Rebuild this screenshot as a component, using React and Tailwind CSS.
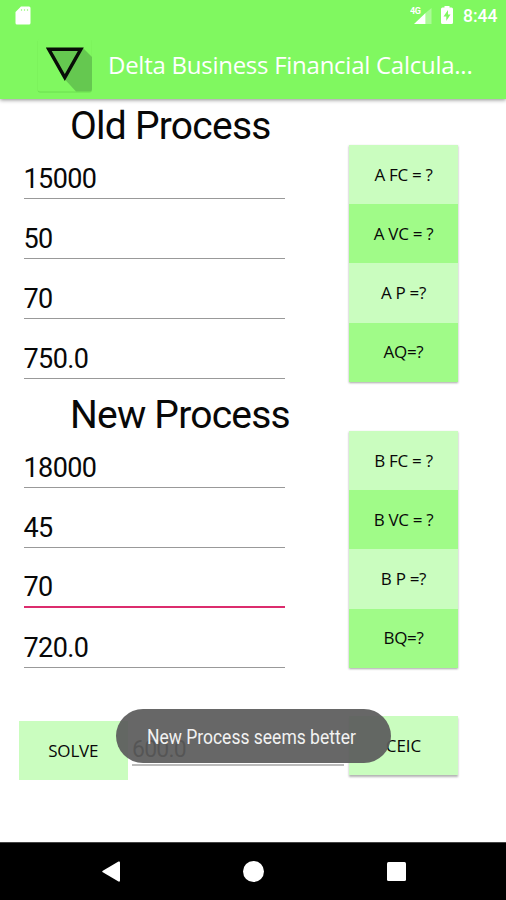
const oldProcess = {
  title: 'Old Process',
  values: ['15000', '50', '70', '750.0'],
  buttons: ['A FC = ?', 'A VC = ?', 'A P =?', 'AQ=?'],
};
const newProcess = {
  title: 'New Process',
  values: ['18000', '45', '70', '720.0'],
  buttons: ['B FC = ?', 'B VC = ?', 'B P =?', 'BQ=?'],
};

function Header() {
  return (
    <header className="relative z-10 h-[98.500px] shrink-0 bg-[#80f860] text-white shadow-[0_1px_4px_rgba(0,0,0,0.45)]">
      <div className="flex h-8 items-center justify-between pl-[15px] pr-[9px]">
        <svg className="mt-[-2px] h-[19px] w-4" viewBox="0 0 16 19" fill="currentColor">
          <path d="M6 0.5h8q1.5 0 1.5 1.5v15q0 1.5-1.5 1.5H2Q.5 18.5 .5 17V6z" />
          <path d="M6.500 3v2M9.500 3v2M12.500 3v2" stroke="#b5fba2" strokeWidth="1.200" />
        </svg>
        <div className="flex items-center">
          <svg className="h-[18px] w-[23px]" viewBox="0 0 23 18" fill="currentColor">
            <text x="0" y="7" fontFamily="Roboto, sans-serif" fontSize="9" fontWeight="700" textLength="11">4G</text>
            <path d="M4 17L15.500 6V17z" />
            <path d="M15.500 6L21.500 1v16h-6z" opacity=".35" />
          </svg>
          <svg className="ml-[8px] mt-[-2px] h-[18px] w-3" viewBox="0 0 12 18">
            <path fill="currentColor" d="M3.500 0h5v1.500h2q1.500 0 1.500 1.500v13.500q0 1.500-1.500 1.500h-9Q0 18 0 16.500V3q0-1.500 1.500-1.500h2z" />
            <path fill="#80f860" d="M7 4L2.500 10.500H5.300V15L9.500 8.500H7z" />
          </svg>
          <span className="ml-[10px] w-[34px] whitespace-nowrap font-[Roboto,sans-serif] text-[17.500px] font-medium leading-8">8:44</span>
        </div>
      </div>
      <div className="flex h-[66px] items-start pl-[37px] pt-[5px]">
        <svg className="h-[56px] w-[56px]" viewBox="0 0 56 56">
          <rect x=".8" y="2.500" width="54" height="53" rx="2" fill="#5fd045" opacity=".6" />
          <rect x=".8" y="1.500" width="54" height="53" rx="2" fill="#80f860" />
          <path d="M46 11L55 20V52Q55 54.500 52.500 54.500H39L27.500 42z" fill="#65c850" />
          <path d="M11.800 12.300H43.800L27.800 40.500z" fill="#65c850" stroke="#080d07" strokeWidth="3.500" />
        </svg>
        <h1 className="ml-[15px] mt-[12px] whitespace-nowrap font-['Open_Sans',sans-serif] text-[24px] leading-8 tracking-[-0.26px]">Delta Business Financial Calcula...</h1>
      </div>
    </header>
  );
}

function Field({ value, active }) {
  return (
    <div className="flex h-[59.900px] items-end">
      <div className={active
        ? 'h-[42px] w-[261.500px] border-b-2 border-[#dc2c6d] text-[27px] leading-[43px] tracking-[-0.6px]'
        : 'h-[41px] w-[261.500px] border-b-[1.500px] border-[#999] text-[27px] leading-[42px] tracking-[-0.6px]'}>{value}</div>
    </div>
  );
}

function Section({ data, first }) {
  return (
    <section className="flex justify-between pl-[23.500px] pr-12">
      <div className="flex flex-col">
        <h2 className={first
          ? 'h-[40.500px] whitespace-nowrap pl-[46.500px] text-[39px] leading-[54px] tracking-[-0.76px]'
          : 'h-[49.500px] whitespace-nowrap pl-[46.500px] text-[39px] leading-[72px] tracking-[-0.78px]'}>
          {data.title}
        </h2>
        {data.values.map((v, i) => <Field key={i} value={v} active={!first && i === 2} />)}
      </div>
      <div className={first ? 'h-[280px] pt-[46.500px]' : 'pt-[52.500px]'}>
        <div className="w-[109px] shadow-[0_1px_2px_rgba(0,0,0,0.35)]">
          {data.buttons.map((label) => (
            <div key={label} className="flex h-[59.200px] items-center justify-center whitespace-pre bg-[#cafdbf] font-['Open_Sans',sans-serif] text-[17px] tracking-[-0.3px] even:bg-[#a0fb88]">
              {label}
            </div>
          ))}
        </div>
      </div>
    </section>
  );
}

export default function App() {
  return (
    <div className="relative flex h-[900px] w-[506px] flex-col overflow-hidden bg-white font-[Roboto,sans-serif] text-[#080808]">
      <Header />
      <main className="flex-1">
        <Section data={oldProcess} first />
        <Section data={newProcess} />
        <div className="flex items-start pl-[19px] pt-[48px] font-['Open_Sans',sans-serif] text-[17px]">
          <div className="mt-[5px] flex h-[59px] w-[108.500px] items-center justify-center bg-[#cafdbf] tracking-[-0.2px]">SOLVE</div>
          <div className="ml-[4.500px] mt-2 h-[42px] w-[212px] border-b-2 border-[#bbb] font-[Roboto,sans-serif] text-[23px] leading-[51px] tracking-[-0.8px]">600.0</div>
          <div className="ml-[5px] flex h-[59px] w-[109px] items-center justify-center bg-[#cafdbf] shadow-[0_2px_2px_rgba(0,0,0,0.3)]">CEIC</div>
        </div>
      </main>
      <nav className="flex h-[58px] shrink-0 items-center border-t border-[#444] bg-black pl-[102px] text-white">
        <svg className="h-[21px] w-[18px]" viewBox="0 0 18 21" fill="currentColor">
          <path d="M16.500 .5Q18 0 18 1.500v18q0 1.500-1.500 1L.8 11.300Q-.4 10.500.8 9.700z" />
        </svg>
        <div className="ml-[123px] size-[21px] rounded-full bg-white" />
        <div className="ml-[122.500px] size-[19.500px] rounded-[1.500px] bg-white" />
      </nav>
      <div className="absolute left-[116px] top-[708.500px] flex h-[54px] w-[275px] items-center justify-center rounded-full bg-[#5b5b5b]/93 pr-[5px] pt-[2px]">
        <span className="scale-x-[0.875] whitespace-nowrap text-[20px] text-[#f2f2f2]">New Process seems better</span>
      </div>
    </div>
  );
}
